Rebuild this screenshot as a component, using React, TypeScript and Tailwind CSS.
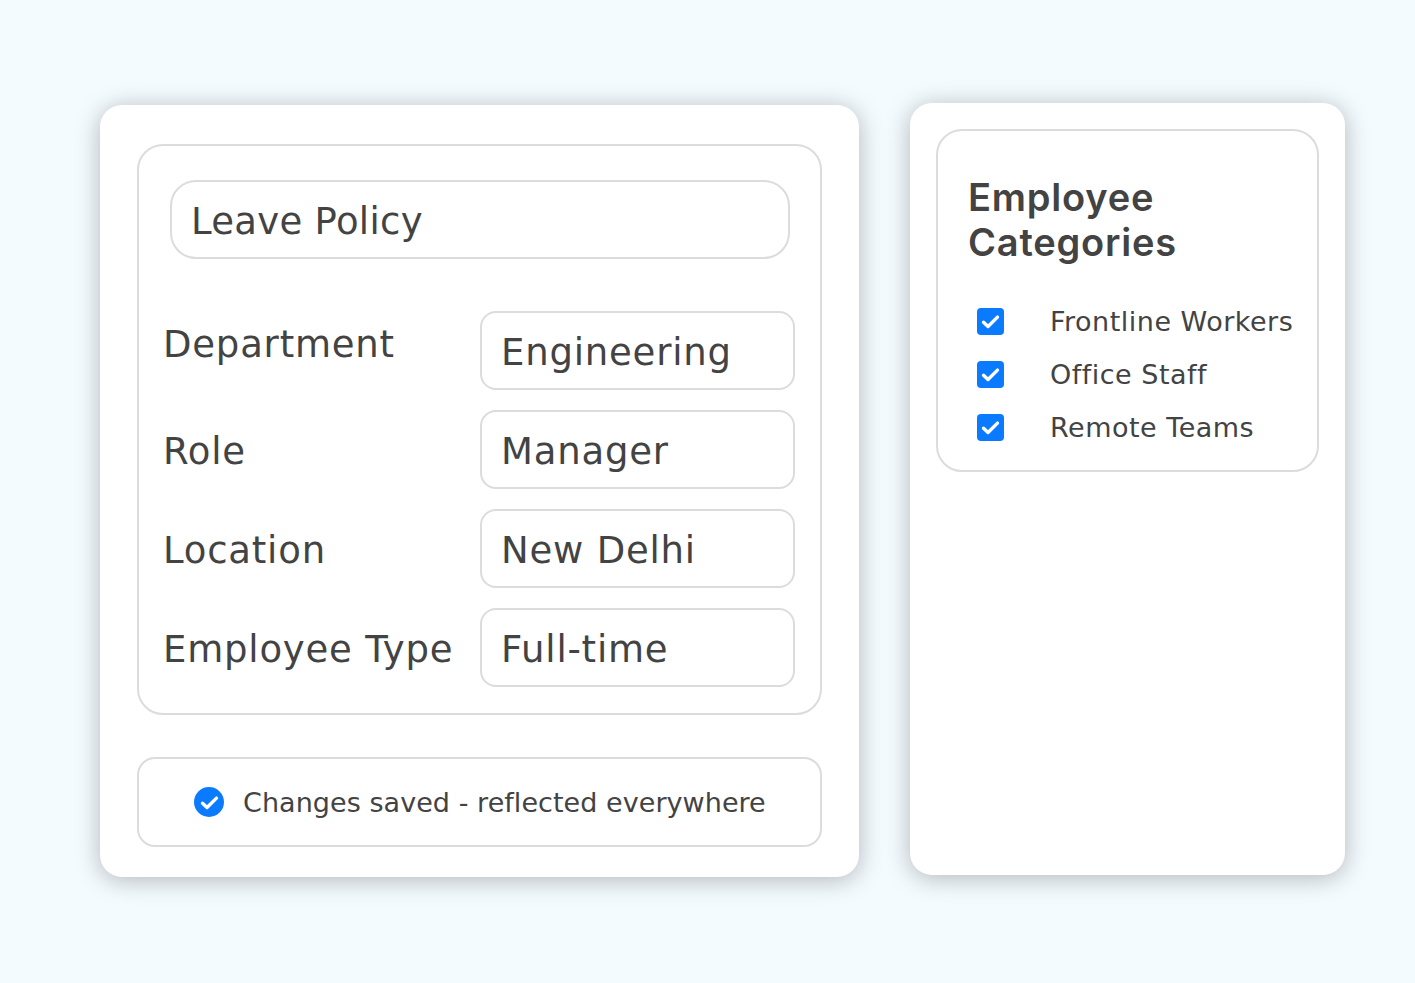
const font = "[font-family:'DejaVu_Sans','Liberation_Sans',sans-serif]";

function Check({ className }: { className: string }) {
  return (
    <svg viewBox="0 0 24 24" className={className} fill="none" stroke="#fff" strokeWidth="3" strokeLinecap="round" strokeLinejoin="round">
      <path d="M5.8 12.6l4 3.9 8.4-8.4" />
    </svg>
  );
}

function Row({ label, value, labelClass = "" }: { label: string; value: string; labelClass?: string }) {
  return (
    <div className="flex items-center">
      <div className={`w-[341px] shrink-0 pl-[24px] pt-[3px] text-[37px] tracking-[0.8px] leading-none whitespace-nowrap ${labelClass}`}>{label}</div>
      <div className="w-[315px] h-[79px] shrink-0 border-2 border-[#dcdcdc] rounded-[16px] flex items-center pl-[19px] pt-[3px] text-[37px] tracking-[0.8px] leading-none whitespace-nowrap">{value}</div>
    </div>
  );
}

function Category({ label }: { label: string }) {
  return (
    <div className="flex items-center h-[27px]">
      <div className="w-[27px] h-[27px] rounded-[4px] bg-[#0a7bff] flex items-center justify-center shrink-0">
        <Check className="w-[27px] h-[27px]" />
      </div>
      <div className="ml-[46px] text-[27px] tracking-[0.5px] whitespace-nowrap leading-none">{label}</div>
    </div>
  );
}

export default function App() {
  return (
    <div className={`w-[1415px] h-[983px] overflow-hidden bg-[#f4fbff] pl-[100px] pt-[103px] flex items-start text-[#434343] ${font}`}>
      <div className="mt-[2px] w-[759px] h-[772px] shrink-0 bg-white rounded-[22px] shadow-[0_3px_24px_rgba(0,0,0,0.28)] pt-[39px] pl-[37px]">
        <div className="w-[685px] h-[571px] border-2 border-[#dcdcdc] rounded-[26px] pt-[34px]">
          <div className="ml-[31px] w-[620px] h-[79px] border-2 border-[#dcdcdc] rounded-[26px] flex items-center pl-[19px] pt-[3px] text-[37px] tracking-[0.3px] leading-none">
            Leave Policy
          </div>
          <div className="mt-[52px] flex flex-col gap-[20px]">
            <Row label="Department" value="Engineering" labelClass="pb-[15px]" />
            <Row label="Role" value="Manager" />
            <Row label="Location" value="New Delhi" />
            <Row label="Employee Type" value="Full-time" />
          </div>
        </div>
        <div className="mt-[42px] w-[685px] h-[90px] border-2 border-[#dcdcdc] rounded-[18px] flex items-center pl-[55px]">
          <div className="w-[30px] h-[30px] rounded-full bg-[#0a7bff] flex items-center justify-center shrink-0">
            <Check className="w-[27px] h-[27px]" />
          </div>
          <div className="ml-[19px] text-[27px] tracking-[0.05px] whitespace-nowrap leading-none">Changes saved - reflected everywhere</div>
        </div>
      </div>
      <div className="ml-[51px] w-[435px] h-[772px] shrink-0 bg-white rounded-[22px] shadow-[0_3px_24px_rgba(0,0,0,0.28)] pt-[26px] pl-[26px]">
        <div className="w-[383px] h-[343px] border-2 border-[#dcdcdc] rounded-[26px] pt-[44px] pl-[30px]">
          <div className="text-[38px] font-semibold leading-[45px] tracking-[0.8px] font-[Inter,sans-serif]">
            Employee<br />Categories
          </div>
          <div className="mt-[43px] ml-[9px] flex flex-col gap-[26px]">
            <Category label="Frontline Workers" />
            <Category label="Office Staff" />
            <Category label="Remote Teams" />
          </div>
        </div>
      </div>
    </div>
  );
}
